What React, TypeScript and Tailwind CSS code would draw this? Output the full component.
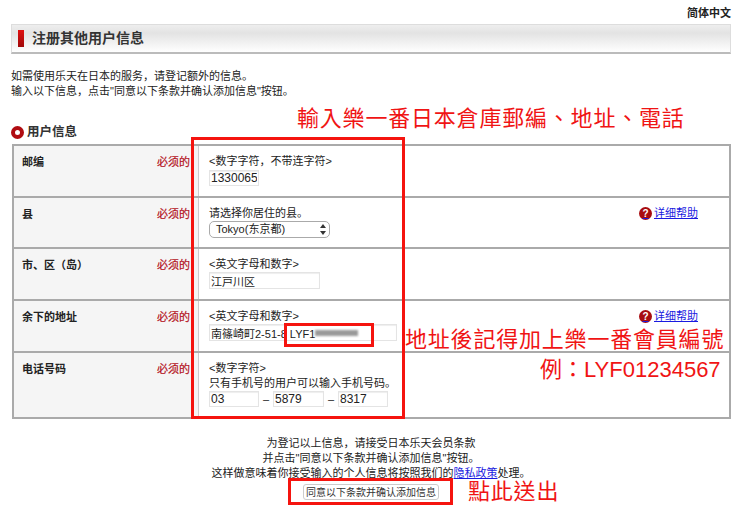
import React from 'react';

const cjk = "font-['Liberation_Sans','Noto_Sans_CJK_SC',sans-serif]";
const red = "font-['Liberation_Sans','Noto_Sans_CJK_TC',sans-serif] text-[#f01414] text-[22px] leading-[26px] whitespace-nowrap absolute";
const box = 'absolute border-[3px] border-[#f5140f] pointer-events-none';
const inputCls = 'block h-[16px] border border-[#e4e4e4] bg-white px-[1px] text-[11px] text-[#222] outline-none shadow-[inset_0_1px_1px_#eee]';

const Row = ({ label, height, help, children }: { label: string; height: string; help?: boolean; children: React.ReactNode }) => (
  <div className={`flex border-t-2 border-[#aaa] ${height}`}>
    <div className="flex w-[185px] shrink-0 justify-between bg-[#f5f5f5] pl-[8px] pr-[8px] pt-[8px] leading-[16px] border-r border-[#ccc]">
      <b className="text-[11px] text-[#222]">{label}</b>
      <b className="text-[11px] font-normal text-[#b3101a] [-webkit-text-stroke:0.2px_#b3101a]">必须的</b>
    </div>
    <div className="flex flex-1 justify-between pl-[10px] pr-[31px] pt-[8px] text-[11px] leading-[15px] text-[#222]">
      <div>{children}</div>
      {help && (
        <a className="flex h-[15px] items-center gap-[2px] text-[11px] text-[#1a1ae0] underline">
          <span className="flex h-[13px] w-[13px] items-center justify-center rounded-full bg-[#a80c10] text-[10px] font-bold text-white no-underline">?</span>
          详细帮助
        </a>
      )}
    </div>
  </div>
);

export default function App() {
  return (
    <div className={`relative h-[508px] w-[750px] overflow-hidden bg-white ${cjk}`}>
      <div className="flex h-[24px] w-[731px] items-center justify-end pt-[3px] text-[11px] font-bold text-[#222]">简体中文</div>

      <div className="ml-[11px] flex h-[30px] w-[720px] items-center border border-[#ddd] border-b-2 border-b-[#bbb] bg-gradient-to-b from-[#eee] via-[#e3e3e3] via-30% to-white pl-[6px]">
        <span className="h-[17px] w-[6px] bg-gradient-to-b from-[#e01010] to-[#a00808]" />
        <h1 className="ml-[8px] text-[14px] font-bold text-[#333]">注册其他用户信息</h1>
      </div>

      <p className="ml-[11px] mt-[15px] text-[11px] leading-[15px] text-[#222]">
        如需使用乐天在日本的服务，请登记额外的信息。
        <br />
        输入以下信息，点击"同意以下条款并确认添加信息"按钮。
      </p>

      <div className="ml-[11px] mt-[24px] flex h-[19px] items-center gap-[3px]">
        <span className="h-[13px] w-[13px] rounded-full border-[4px] border-[#b00c12] bg-white" />
        <h2 className="text-[12.5px] font-bold text-[#333]">用户信息</h2>
      </div>

      <div className="ml-[12px] mt-[2px] w-[719px] border-x-2 border-b-2 border-[#aaa]">
        <Row label="邮编" height="h-[52px]">
          &lt;数字字符，不带连字符&gt;
          <input readOnly value="1330065" className={`${inputCls} mt-[1px] w-[50px] text-[12px]`} />
        </Row>
        <Row label="县" height="h-[51px]" help>
          请选择你居住的县。
          <div className="flex h-[17px] w-[121px] items-center justify-between rounded-[5px] border border-[#aaa] bg-white pl-[6px] pr-[3px] text-[11px]">
            Tokyo(东京都)
            <svg width="6" height="11" viewBox="0 0 6 11"><path d="M3 0l3 4H0zM3 11L0 7h6z" fill="#333" /></svg>
          </div>
        </Row>
        <Row label="市、区（岛）" height="h-[52px]">
          &lt;英文字母和数字&gt;
          <input readOnly value="江戸川区" className={`${inputCls} h-[17px] w-[111px]`} />
        </Row>
        <Row label="余下的地址" height="h-[52px]" help>
          &lt;英文字母和数字&gt;
          <input readOnly value="南篠崎町2-51-8 LYF1" className={`${inputCls} h-[17px] w-[188px]`} />
        </Row>
        <Row label="电话号码" height="h-[66px]">
          &lt;数字字符&gt;
          <br />
          只有手机号的用户可以输入手机号码。
          <div className="flex items-center">
            <input readOnly value="03" className={`${inputCls} w-[50px] text-[12px]`} />
            <span className="w-[14px] text-center">–</span>
            <input readOnly value="5879" className={`${inputCls} w-[51px] text-[12px]`} />
            <span className="w-[14px] text-center">–</span>
            <input readOnly value="8317" className={`${inputCls} w-[50px] text-[12px]`} />
          </div>
        </Row>
      </div>

      <div className="mt-[17px] w-[742px] text-center text-[11px] leading-[15px] text-[#222]">
        为登记以上信息，请接受日本乐天会员条款
        <br />
        并点击"同意以下条款并确认添加信息"按钮。
        <br />
        这样做意味着你接受输入的个人信息将按照我们的<a className="text-[#1a1ae0] underline">隐私政策</a>处理。
      </div>
      <div className="mt-[3px] flex w-[742px] justify-center">
        <button className="flex h-[16px] w-[136px] items-center justify-center rounded-[3px] border border-[#ccc] bg-white text-[10px] text-[#333]">同意以下条款并确认添加信息</button>
      </div>

      {/* annotations drawn over the form */}
      <div className="absolute left-[315px] top-[330px] h-[6px] w-[43px] bg-[#999] blur-[1px]" />
      <div className={`${box} left-[191px] top-[137px] h-[282px] w-[214px]`} />
      <div className={`${box} left-[284px] top-[323px] h-[24px] w-[90px]`} />
      <div className={`${box} left-[288px] top-[478px] h-[27px] w-[165px]`} />
      <span className={`${red} tracking-[0.8px] left-[297px] top-[106px]`}>輸入樂一番日本倉庫郵編、地址、電話</span>
      <span className={`${red} tracking-[0.8px] left-[405px] top-[327px]`}>地址後記得加上樂一番會員編號</span>
      <span className={`${red} left-[540px] top-[357px]`}>例：LYF01234567</span>
      <span className={`${red} tracking-[0.8px] left-[468px] top-[479px]`}>點此送出</span>
    </div>
  );
}
